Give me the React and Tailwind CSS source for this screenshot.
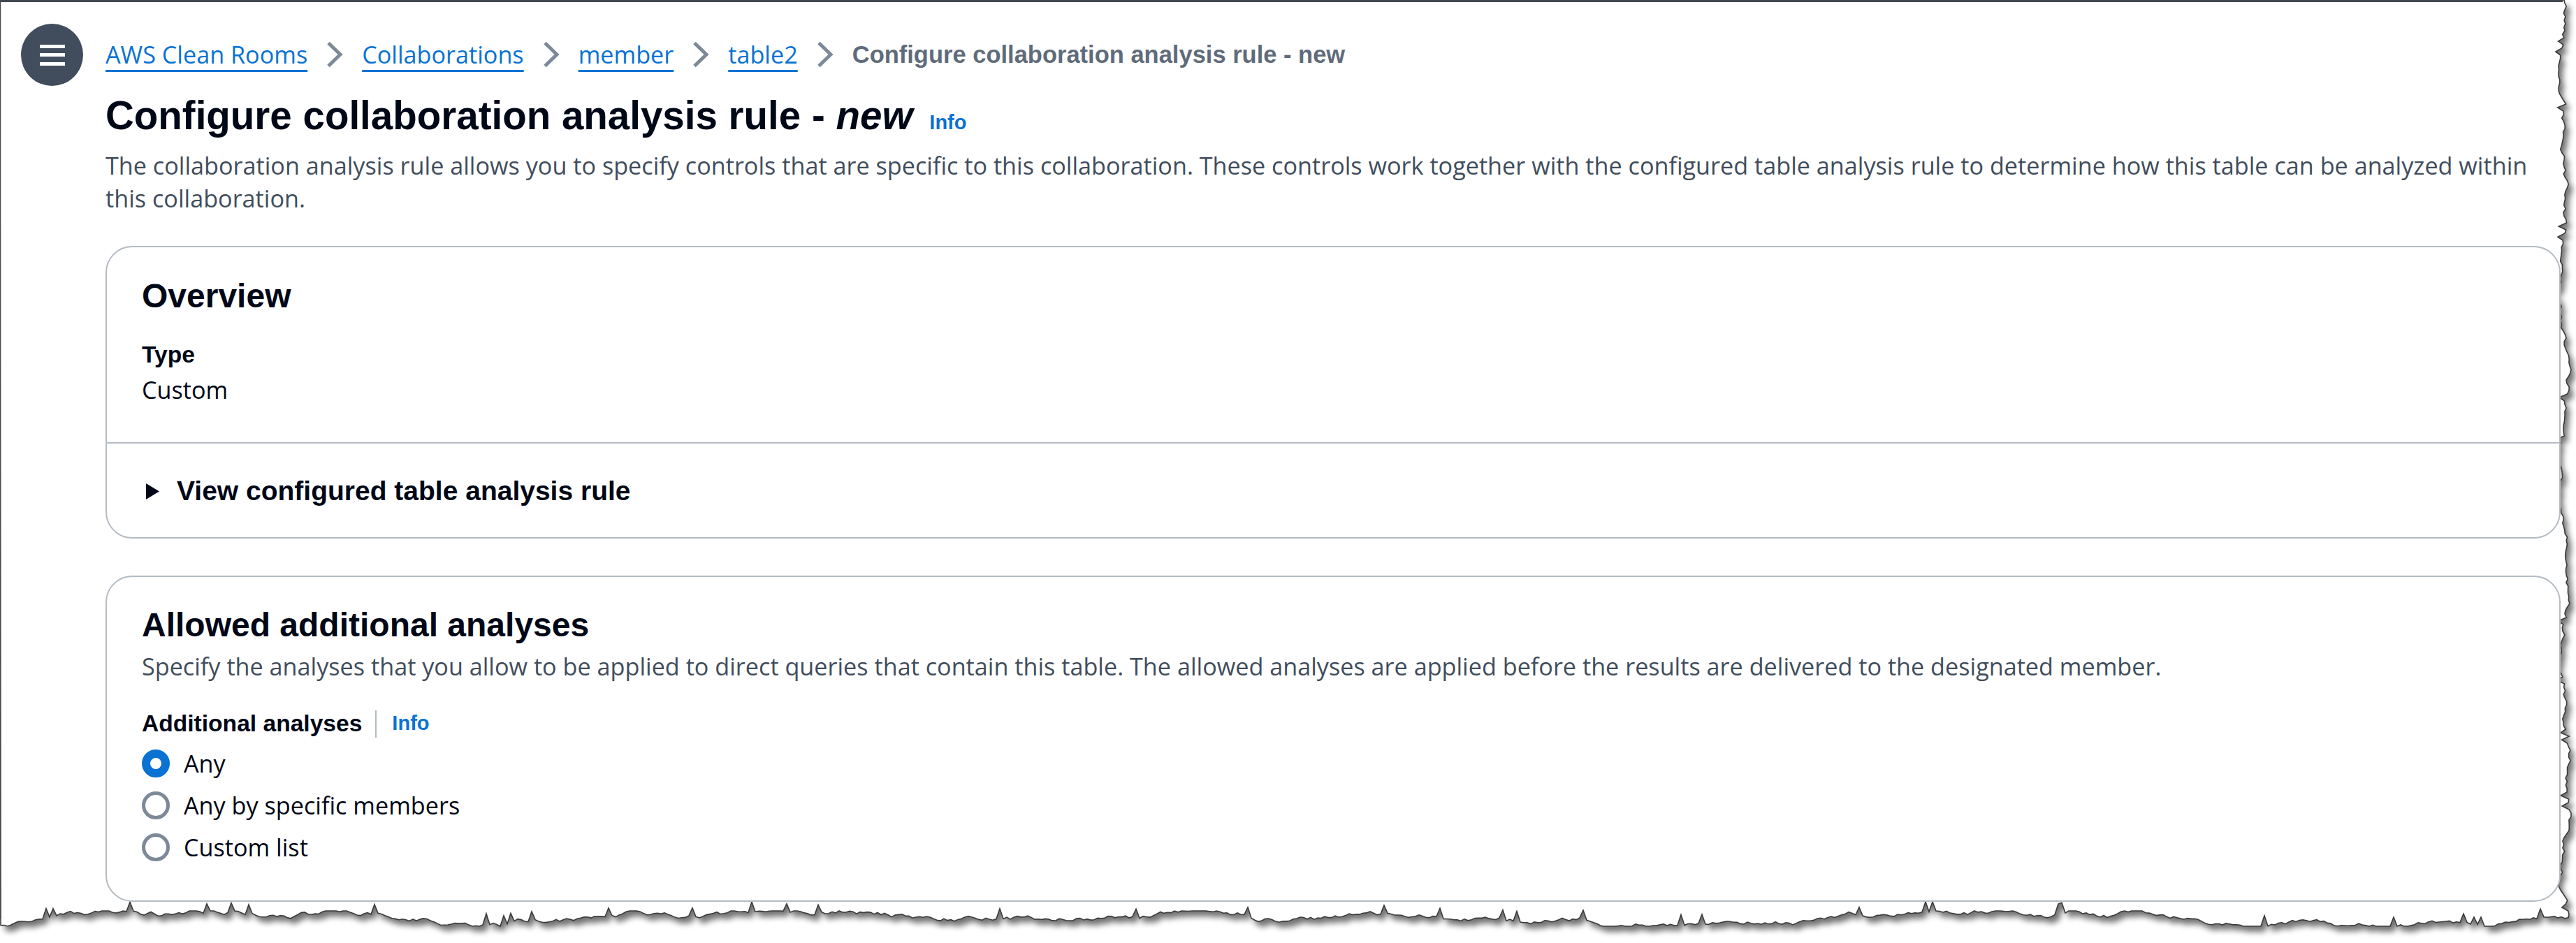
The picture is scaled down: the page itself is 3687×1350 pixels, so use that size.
import React from 'react';

const bold = "font-['Liberation_Sans',Arial,sans-serif] font-bold";
const reg = "font-['Open_Sans','Noto_Sans',sans-serif]";

// seeded random so the torn edge is the same every render
const makeRand = (seed) => () => {
  seed = (seed + 0x6d2b79f5) | 0;
  let t = Math.imul(seed ^ (seed >>> 15), 1 | seed);
  t = (t + Math.imul(t ^ (t >>> 7), 61 | t)) ^ t;
  return ((t ^ (t >>> 14)) >>> 0) / 4294967296;
};

const buildTornPath = () => {
  const r = makeRand(42);
  const pts = ['M0,0', 'L3670,0'];
  let x = 3670;
  for (let y = 4; y <= 1316; y += 5) {
    x += (r() - 0.5) * 7;
    if (x < 3662) x = 3662;
    if (x > 3680) x = 3680;
    const spike = r() < 0.05 ? -9 : 0;
    pts.push(`L${(x + spike).toFixed(1)},${y}`);
  }
  let y = 1314;
  for (let bx = Math.round(x); bx >= 0; bx -= 5) {
    y += (r() - 0.5) * 6;
    if (y < 1304) y = 1304;
    if (y > 1326) y = 1326;
    const spike = r() < 0.05 ? -13 : 0;
    pts.push(`L${bx},${(y + spike).toFixed(1)}`);
  }
  pts.push('Z');
  return pts.join(' ');
};

const tornPath = buildTornPath();

const Chevron = () => (
  <svg width="24" height="38" viewBox="0 0 24 38" className="mx-[27px] shrink-0">
    <polyline points="3,2.5 20,19 3,35.5" fill="none" stroke="#7d8998" strokeWidth="5" />
  </svg>
);

const Crumb = ({ children }) => (
  <a className={`${reg} text-[34.2px] leading-[48px] text-[#0972d3] underline decoration-[3px] underline-offset-[9px]`}>
    {children}
  </a>
);

const Radio = ({ checked, label }) => (
  <div className="flex items-center h-[60px]">
    {checked ? (
      <span className="w-[40px] h-[40px] rounded-full border-[12px] border-[#0972d3] bg-white shrink-0" />
    ) : (
      <span className="w-[40px] h-[40px] rounded-full border-[5px] border-[#7d8998] bg-white shrink-0" />
    )}
    <span className={`${reg} ml-[20px] text-[34.2px] leading-[48px] text-[#000716]`}>{label}</span>
  </div>
);

const App = () => {
  return (
    <div className="relative w-[3687px] h-[1350px] overflow-hidden bg-white">
      <svg className="absolute inset-0" width="3687" height="1350">
        <defs>
          <filter id="tornShadow" x="-5%" y="-5%" width="110%" height="110%">
            <feGaussianBlur stdDeviation="4" />
          </filter>
        </defs>
        <path d={tornPath} fill="#000" opacity="0.55" transform="translate(6,8)" filter="url(#tornShadow)" />
        <path d={tornPath} fill="#fff" stroke="#3b3b3b" strokeWidth="1.6" />
        <rect x="0" y="0" width="3668" height="3" fill="#414750" />
        <line x1="0.5" y1="0" x2="0.5" y2="1316" stroke="#4a4a4a" strokeWidth="1.5" />
      </svg>

      <div className="relative z-10 flex">
        {/* nav toggle */}
        <div className="w-[151px] shrink-0 pt-[34px] pl-[30px]">
          <div className="w-[89px] h-[89px] rounded-full bg-[#414d5c] flex flex-col items-center justify-center gap-[7.5px]">
            <span className="w-[36px] h-[5px] bg-white" />
            <span className="w-[36px] h-[5px] bg-white" />
            <span className="w-[36px] h-[5px] bg-white" />
          </div>
        </div>

        <div className="w-[3514px] shrink-0 pt-[54px]">
          {/* breadcrumbs */}
          <nav className="flex items-center h-[48px]">
            <Crumb>AWS Clean Rooms</Crumb>
            <Chevron />
            <Crumb>Collaborations</Crumb>
            <Chevron />
            <Crumb>member</Crumb>
            <Chevron />
            <Crumb>table2</Crumb>
            <Chevron />
            <span className={`${bold} text-[34.5px] leading-[48px] text-[#5f6b7a]`}>
              Configure collaboration analysis rule - new
            </span>
          </nav>

          {/* page header */}
          <div className="mt-[29px] flex items-baseline">
            <h1 className={`${bold} text-[56.5px] leading-[70px] text-[#000716]`}>
              Configure collaboration analysis rule - <i>new</i>
            </h1>
            <a className={`${bold} ml-[24px] text-[29px] text-[#0972d3]`}>Info</a>
          </div>
          <p className={`${reg} mt-[12px] text-[34.2px] leading-[47px] text-[#414d5c]`}>
            The collaboration analysis rule allows you to specify controls that are specific to this collaboration. These
            controls work together with the configured table analysis rule to determine how this table can be analyzed
            within this collaboration.
          </p>

          {/* overview */}
          <section className="mt-[45px] rounded-[38px] border-2 border-[#b4bbc3] bg-white">
            <div className="px-[50px] pt-[41px] pb-[51px]">
              <h2 className={`${bold} text-[48px] leading-[58px] text-[#000716]`}>Overview</h2>
              <div className={`${bold} mt-[31px] text-[33.6px] leading-[48px] text-[#000716]`}>Type</div>
              <div className={`${reg} mt-[2px] text-[34.2px] leading-[48px] text-[#000716]`}>Custom</div>
            </div>
            <div className="border-t-2 border-[#b4bbc3] px-[50px] pt-[44px] pb-[42px]">
              <div className="flex items-center h-[48px]">
                <svg width="19" height="23" viewBox="0 0 19 23" className="ml-[6px] shrink-0">
                  <polygon points="0,0 19,11.5 0,23" fill="#000716" />
                </svg>
                <span className={`${bold} ml-[25px] text-[39px] leading-[48px] text-[#000716]`}>
                  View configured table analysis rule
                </span>
              </div>
            </div>
          </section>

          {/* allowed additional analyses */}
          <section className="mt-[53px] rounded-[38px] border-2 border-[#b4bbc3] bg-white px-[50px] pt-[40px] pb-[46px]">
            <h2 className={`${bold} text-[48px] leading-[58px] text-[#000716]`}>Allowed additional analyses</h2>
            <p className={`${reg} mt-[6px] text-[34.2px] leading-[48px] text-[#414d5c]`}>
              Specify the analyses that you allow to be applied to direct queries that contain this table. The allowed
              analyses are applied before the results are delivered to the designated member.
            </p>
            <div className="mt-[34px] flex items-center h-[48px]">
              <span className={`${bold} text-[33.6px] leading-[48px] text-[#000716]`}>Additional analyses</span>
              <span className="ml-[19px] w-[2px] h-[39px] bg-[#b4bbc3]" />
              <a className={`${bold} ml-[22px] text-[29px] text-[#0972d3]`}>Info</a>
            </div>
            <div className="mt-[3px]">
              <Radio checked label="Any" />
              <Radio label="Any by specific members" />
              <Radio label="Custom list" />
            </div>
          </section>
        </div>
      </div>
    </div>
  );
};

export default App;
